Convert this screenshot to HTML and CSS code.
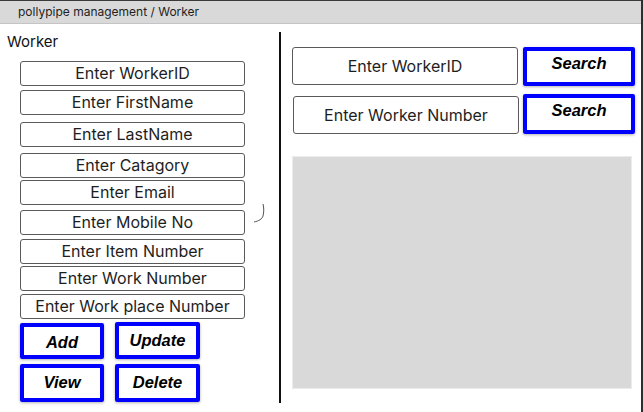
FILE: index.html
```html
<!DOCTYPE html>
<html>
<head>
<meta charset="utf-8">
<link rel="stylesheet" href="styles.css">
</head>
<body>
<div class="frame">
  <div class="topbar">pollypipe management / Worker</div>
  <div class="main">
    <div class="left">
      <div class="title">Worker</div>
      <div class="fields">
        <div class="field f1">Enter WorkerID</div>
        <div class="field f2">Enter FirstName</div>
        <div class="field f3">Enter LastName</div>
        <div class="field f4">Enter Catagory</div>
        <div class="field f5">Enter Email</div>
        <div class="field f6">Enter Mobile No
          <svg class="hook" width="14" height="22" viewBox="0 0 14 22"><path d="M10 1 C11 5 11 9 10 13 C9 16 6 18 1 19" fill="none" stroke="#555" stroke-width="1"/></svg>
        </div>
        <div class="field f7">Enter Item Number</div>
        <div class="field f8">Enter Work Number</div>
        <div class="field f9">Enter Work place Number</div>
      </div>
      <div class="actions">
        <div class="btn b-add">Add</div>
        <div class="btn b-upd">Update</div>
        <div class="btn b-view">View</div>
        <div class="btn b-del">Delete</div>
      </div>
    </div>
    <div class="divider"></div>
    <div class="right">
      <div class="search-row r1">
        <div class="sfield">Enter WorkerID</div>
        <div class="sbtn">Search</div>
      </div>
      <div class="search-row r2">
        <div class="sfield">Enter Worker Number</div>
        <div class="sbtn">Search</div>
      </div>
      <div class="results"></div>
    </div>
  </div>
</div>
</body>
</html>
```
FILE: styles.css
```css
* { box-sizing: border-box; }
html, body { margin: 0; padding: 0; background: #fff; }
body { font-family: Inter, "Noto Sans", sans-serif; color: #1e1e1e; }
.frame {
  width: 643px;
  height: 412px;
  border-right: 2px solid #2e2e2e;
  overflow: hidden;
}
.topbar {
  height: 24px;
  background: #d9d9d9;
  border-top: 1px solid #3a3a3a;
  border-bottom: 1px solid #c4c4c4;
  padding-left: 18px;
  font-size: 12px;
  line-height: 21px;
  color: #1e1e1e;
}
.main { display: flex; height: 388px; }
.left { width: 279px; padding-left: 7px; }
.title { font-size: 15px; line-height: 18px; margin-top: 9px; color: #111; }
.fields {
  margin-top: 10px;
  margin-left: 13px;
  width: 225px;
  display: flex;
  flex-direction: column;
}
.field {
  position: relative;
  height: 25px;
  border: 1px solid #5a5a5a;
  border-radius: 3px;
  font-size: 16px;
  line-height: 23px;
  text-align: center;
  color: #1e1e1e;
}
.f2 { margin-top: 4px; }
.f3 { margin-top: 7px; }
.f4 { margin-top: 6px; }
.f5 { margin-top: 2px; }
.f6 { margin-top: 5px; }
.f7 { margin-top: 4px; }
.f8 { margin-top: 2px; }
.f9 { margin-top: 3px; }
.hook { position: absolute; left: 232px; top: -8px; }
.actions {
  margin-top: 3px;
  margin-left: 13px;
  display: grid;
  grid-template-columns: 84px 85px;
  grid-template-rows: 37px 38px;
  column-gap: 11px;
  row-gap: 5px;
}
.btn, .sbtn {
  border: 4px solid #0000ff;
  border-radius: 2px;
  box-shadow: 0 1px 3px rgba(0,0,0,0.3);
  font-family: "Liberation Sans", Arial, sans-serif;
  font-weight: bold;
  font-style: italic;
  font-size: 16.5px;
  color: #000;
  text-align: center;
}
.btn { line-height: 28px; }
.b-add { margin-top: 1px; padding-top: 1px; }
.b-upd { padding-top: 0; }
.divider {
  width: 2px;
  height: 371px;
  margin-top: 8px;
  background: #111;
}
.right { flex: 1; padding-left: 10px; }
.search-row { display: flex; }
.r1 { margin-top: 23px; padding-left: 1px; }
.r2 { margin-top: 10px; padding-left: 2px; }
.sfield {
  width: 226px;
  height: 38px;
  border: 1px solid #5a5a5a;
  border-radius: 3px;
  font-size: 16px;
  line-height: 36px;
  text-align: center;
  color: #1e1e1e;
}
.sbtn {
  width: 112px;
  height: 39px;
  margin-left: 5px;
  line-height: 20px;
  padding-top: 2px;
}
.r2 .sbtn { margin-left: 4px; margin-top: -2px; height: 40px; }
.results {
  margin-top: 22px;
  margin-left: 1px;
  width: 340px;
  height: 233px;
  background: #d9d9d9;
  border: 1px solid #ececec;
}
```
